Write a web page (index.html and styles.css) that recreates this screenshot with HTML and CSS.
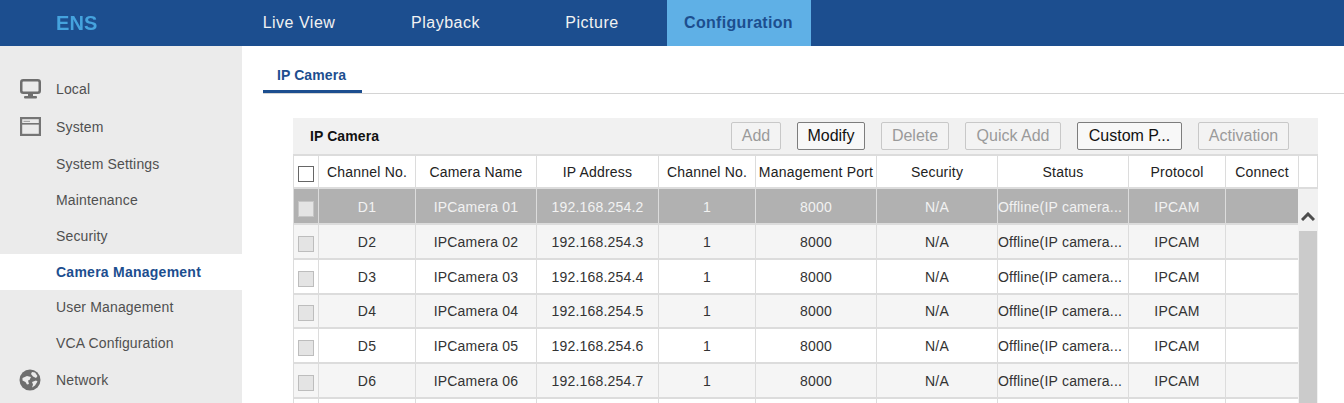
FILE: index.html
```html
<!DOCTYPE html>
<html lang="en">
<head>
<meta charset="utf-8">
<title>Configuration</title>
<link rel="stylesheet" href="styles.css">
</head>
<body>
<header class="topbar">
  <div class="logo">ENS</div>
  <nav class="topnav">
    <a class="topnav-item">Live View</a>
    <a class="topnav-item">Playback</a>
    <a class="topnav-item">Picture</a>
    <a class="topnav-item active">Configuration</a>
  </nav>
</header>
<div class="body-row">
  <aside class="sidebar">
    <div class="side-item local">
      <svg class="side-icon" viewBox="0 0 21 20"><rect x="1.25" y="1.25" width="18.5" height="12.5" rx="2" fill="none" stroke="#6e6e6e" stroke-width="2.5"/><rect x="8" y="14" width="5" height="3.5" fill="#6e6e6e"/><rect x="4" y="17" width="13" height="2.5" rx="1" fill="#6e6e6e"/></svg>
      <span>Local</span>
    </div>
    <div class="side-item system">
      <svg class="side-icon" viewBox="0 0 21 20"><rect x="1.1" y="1.1" width="18.8" height="16.8" fill="none" stroke="#757575" stroke-width="2.2"/><rect x="1" y="6" width="19" height="1.6" fill="#757575"/><rect x="3.5" y="3.8" width="6.5" height="1.2" fill="#a8a8a8"/></svg>
      <span>System</span>
    </div>
    <div class="side-sub s1">System Settings</div>
    <div class="side-sub">Maintenance</div>
    <div class="side-sub">Security</div>
    <div class="side-sub current">Camera Management</div>
    <div class="side-sub short">User Management</div>
    <div class="side-sub">VCA Configuration</div>
    <div class="side-item network">
      <svg class="side-icon globe" viewBox="0 0 22 22"><circle cx="11" cy="11" r="10.5" fill="#6e6e6e"/><path d="M3.5 9 8 7 12 8 10.5 11 9 11.5 10 15 8 15.5 6.5 13 3.5 11.5Z M13 3 16 3.5 18.5 7 17 9 14 7.5 12 5Z M13 13 17 11.5 18.5 12.5 16 16.5 13 18.5 14 15.5Z" fill="#ebebeb"/></svg>
      <span>Network</span>
    </div>
  </aside>
  <main class="content">
    <div class="tabs"><div class="tab">IP Camera</div></div>
    <section class="panel">
      <div class="toolbar">
        <div class="toolbar-title">IP Camera</div>
        <div class="btns">
          <button class="btn off">Add</button>
          <button class="btn">Modify</button>
          <button class="btn off">Delete</button>
          <button class="btn off">Quick Add</button>
          <button class="btn">Custom P...</button>
          <button class="btn off">Activation</button>
        </div>
      </div>
      <div class="row head">
        <div class="cell"><span class="check"></span></div>
        <div class="cell">Channel No.</div>
        <div class="cell">Camera Name</div>
        <div class="cell">IP Address</div>
        <div class="cell">Channel No.</div>
        <div class="cell">Management Port</div>
        <div class="cell">Security</div>
        <div class="cell">Status</div>
        <div class="cell">Protocol</div>
        <div class="cell">Connect</div>
        <div class="cell"></div>
      </div>
      <div class="rows-wrap">
        <div class="rows">
          <div class="row sel"><div class="cell"><span class="check"></span></div><div class="cell">D1</div><div class="cell">IPCamera 01</div><div class="cell">192.168.254.2</div><div class="cell">1</div><div class="cell">8000</div><div class="cell">N/A</div><div class="cell status">Offline(IP camera...</div><div class="cell">IPCAM</div><div class="cell"></div></div>
          <div class="row alt"><div class="cell"><span class="check"></span></div><div class="cell">D2</div><div class="cell">IPCamera 02</div><div class="cell">192.168.254.3</div><div class="cell">1</div><div class="cell">8000</div><div class="cell">N/A</div><div class="cell status">Offline(IP camera...</div><div class="cell">IPCAM</div><div class="cell"></div></div>
          <div class="row"><div class="cell"><span class="check"></span></div><div class="cell">D3</div><div class="cell">IPCamera 03</div><div class="cell">192.168.254.4</div><div class="cell">1</div><div class="cell">8000</div><div class="cell">N/A</div><div class="cell status">Offline(IP camera...</div><div class="cell">IPCAM</div><div class="cell"></div></div>
          <div class="row alt"><div class="cell"><span class="check"></span></div><div class="cell">D4</div><div class="cell">IPCamera 04</div><div class="cell">192.168.254.5</div><div class="cell">1</div><div class="cell">8000</div><div class="cell">N/A</div><div class="cell status">Offline(IP camera...</div><div class="cell">IPCAM</div><div class="cell"></div></div>
          <div class="row"><div class="cell"><span class="check"></span></div><div class="cell">D5</div><div class="cell">IPCamera 05</div><div class="cell">192.168.254.6</div><div class="cell">1</div><div class="cell">8000</div><div class="cell">N/A</div><div class="cell status">Offline(IP camera...</div><div class="cell">IPCAM</div><div class="cell"></div></div>
          <div class="row alt"><div class="cell"><span class="check"></span></div><div class="cell">D6</div><div class="cell">IPCamera 06</div><div class="cell">192.168.254.7</div><div class="cell">1</div><div class="cell">8000</div><div class="cell">N/A</div><div class="cell status">Offline(IP camera...</div><div class="cell">IPCAM</div><div class="cell"></div></div>
          <div class="row"><div class="cell"></div><div class="cell"></div><div class="cell"></div><div class="cell"></div><div class="cell"></div><div class="cell"></div><div class="cell"></div><div class="cell"></div><div class="cell"></div><div class="cell"></div></div>
        </div>
        <div class="scrollbar">
          <svg class="scroll-up" viewBox="0 0 14 9"><path d="M1 8 7 2 13 8" fill="none" stroke="#4d4d4d" stroke-width="3"/></svg>
          <div class="thumb"></div>
        </div>
      </div>
    </section>
  </main>
</div>
</body>
</html>
```
FILE: styles.css
```css
* { box-sizing: border-box; }
html, body { margin: 0; height: 403px; overflow: hidden; }
body { font-family: "Liberation Sans", Arial, sans-serif; font-size: 14px; color: #222; background: #fff; }

.topbar { height: 46px; background: #1c4e8f; display: flex; }
.logo { width: 227px; padding: 13px 0 0 56px; font-size: 20px; line-height: 20px; font-weight: bold; color: #45a3de; letter-spacing: 0.1px; filter: blur(0.4px); }
.topnav { display: flex; gap: 2.5px; }
.topnav-item { width: 144px; text-align: center; line-height: 46px; font-size: 16px; letter-spacing: 0.5px; color: #f2f2f2; }
.topnav-item.active { background: #5fb0e6; color: #1c4e8f; font-weight: bold; letter-spacing: 0.3px; }

.body-row { display: flex; height: 357px; overflow: hidden; }
.sidebar { width: 242px; background: #ebebeb; padding-top: 25px; color: #505050; letter-spacing: 0.15px; }
.side-item { display: flex; align-items: center; height: 36px; padding-left: 20px; gap: 15px; }
.side-item.system { margin-top: 2px; }
.side-item.network { margin-top: 1px; }
.side-icon { width: 21px; height: 20px; flex: none; }
.side-icon.globe { width: 22px; height: 22px; margin-left: -1px; }
.side-sub { height: 36px; line-height: 36px; padding-left: 56px; }
.side-sub.s1 { margin-top: 1px; }
.side-sub.short { height: 35px; line-height: 35px; }
.side-sub.current { background: #fff; color: #1c4e8f; font-weight: bold; letter-spacing: 0.25px; }

.content { flex: 1; padding: 0 0 0 21px; min-width: 0; }
.tabs { height: 48px; border-bottom: 1px solid #d4d4d4; padding-top: 20px; }
.tab { display: inline-block; width: 99px; height: 27px; padding-left: 14px; line-height: 19px; font-weight: bold; color: #1c4e8f; border-bottom: 3px solid #1c4e8f; letter-spacing: 0.1px; }
.panel { width: 1025px; margin: 24px 0 0 30px; }

.toolbar { height: 36px; background: #f1f1f1; display: flex; align-items: center; justify-content: space-between; padding: 0 29px 0 17px; }
.toolbar-title { font-weight: bold; color: #111; letter-spacing: 0.1px; }
.btns { display: grid; grid-template-columns: 50px 68px 68px 96px 105px 91px; gap: 16px; }
.btn { height: 28px; padding: 0; font: 16px "Liberation Sans", Arial, sans-serif; color: #111; background: #f8f8f8; border: 1px solid #7d7d7d; border-radius: 2px; }
.btn.off { color: #9a9a9a; background: #f3f3f3; border-color: #c8c8c8; }

.row { display: grid; grid-template-columns: 25px 97px 121px 122px 97px 121px 121px 131px 97px 73px; height: 34.75px; }
.row.head { grid-template-columns: 25px 97px 121px 122px 97px 121px 121px 131px 97px 73px 20px; height: 35px; border-top: 2px solid #dcdcdc; }
.row.sel { height: 36px; }
.cell { display: flex; align-items: center; justify-content: center; white-space: nowrap; overflow: hidden; padding-top: 1px; border-left: 1px solid #dcdcdc; border-bottom: 2px solid #dcdcdc; color: #333; letter-spacing: 0.2px; }
.head .cell { color: #222; padding-top: 0; }
.head .cell:last-child { border-right: 1px solid #dcdcdc; }
.cell.status { justify-content: flex-start; }
.alt { background: #f5f5f5; }
.sel { background: #b1b1b1; }
.sel .cell { color: #f2f2f2; }
.check { width: 16px; height: 16px; margin-top: 4px; border: 1px solid #bdbdbd; background: #e4e4e4; flex: none; }
.head .check { background: #fff; border-color: #666; }
.sel .check { border-color: #c6c6c6; }

.rows-wrap { display: flex; height: 214px; overflow: hidden; }
.rows { width: 1005px; flex: none; }
.scrollbar { width: 20px; flex: none; background: #f1f1f1; padding: 23px 1px 0; display: flex; flex-direction: column; }
.scroll-up { width: 14px; height: 9px; margin-left: 2px; flex: none; }
.thumb { width: 18px; flex: 1; background: #cbcbcb; margin-top: 10px; }
```
